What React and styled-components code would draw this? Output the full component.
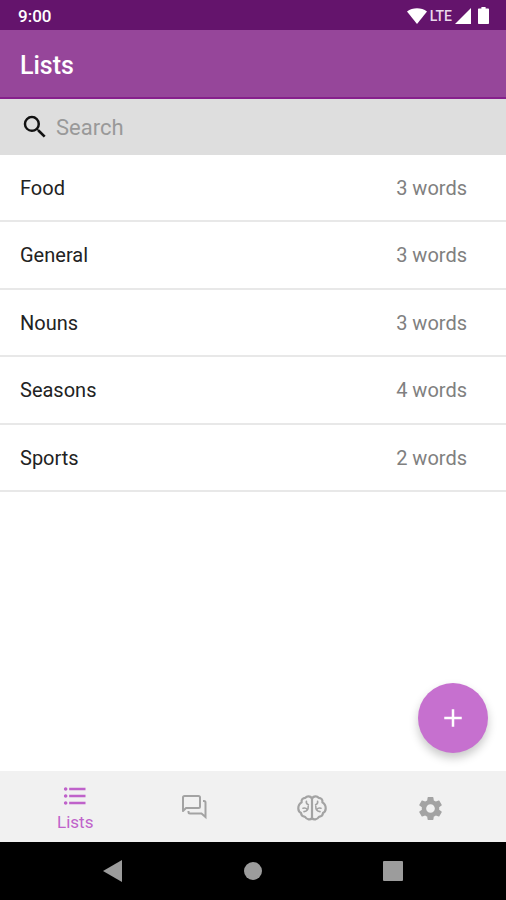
import { useState } from "react";
import styled, { createGlobalStyle } from "styled-components";
import {
  MdAdd,
  MdFormatListBulleted,
  MdSearch,
  MdSettings,
} from "react-icons/md";

const GlobalStyle = createGlobalStyle`
  * {
    box-sizing: border-box;
  }

  body {
    margin: 0;
    font-family: Roboto, "Liberation Sans", sans-serif;
    background-color: white;
  }
`;

const Container = styled.div`
  min-height: 100vh;
  display: flex;
  flex-direction: column;
`;

const StatusBar = styled.div`
  height: 30px;
  padding: 1px 17px 0 18px;
  display: flex;
  align-items: center;
  justify-content: space-between;
  color: white;
  background-color: #64146c;
`;

const Time = styled.span`
  font-size: 17px;
  font-weight: 500;
  line-height: 28px;
`;

const StatusIcons = styled.div`
  display: flex;
  align-items: center;
  gap: 3px;
`;

const Network = styled.span`
  font-size: 14px;
  font-weight: 500;
  line-height: 28px;
  color: #ead9ec;
`;

const Battery = styled.svg`
  margin-left: 4px;
`;

const Header = styled.header`
  height: 69px;
  padding: 4px 20px 0;
  display: flex;
  align-items: center;
  color: white;
  background-color: #96469a;
  border-bottom: 2px solid #86208c;
`;

const Title = styled.h1`
  margin: 0;
  font-size: 25px;
  font-weight: 500;
`;

const SearchBar = styled.label`
  height: 56px;
  padding: 0 20px;
  display: flex;
  align-items: center;
  gap: 6px;
  color: #111;
  background-color: #dedede;
`;

const SearchInput = styled.input`
  flex: 1;
  min-width: 0;
  padding: 0;
  border: none;
  outline: none;
  font-family: inherit;
  font-size: 22px;
  color: #222;
  background: transparent;

  &::placeholder {
    color: #999;
    opacity: 1;
  }
`;

const Main = styled.main`
  flex: 1;
  position: relative;
`;

const WordLists = styled.ul`
  margin: 0;
  padding: 0;
  list-style: none;
`;

const Row = styled.li`
  height: 67px;
  padding: 0 39px 0 20px;
  display: flex;
  align-items: center;
  justify-content: space-between;
  font-size: 20px;
  border-bottom: 2px solid #e8e8e8;

  &:nth-child(even) {
    height: 68px;
  }
`;

const Name = styled.span`
  color: #222;
`;

const Count = styled.span`
  color: #808080;
`;

const AddButton = styled.button`
  position: absolute;
  right: 18px;
  bottom: 18px;
  width: 70px;
  height: 70px;
  padding: 0;
  display: flex;
  align-items: center;
  justify-content: center;
  border: none;
  border-radius: 50%;
  color: white;
  background-color: #c670cf;
  box-shadow: 0 5px 10px rgba(0, 0, 0, 0.22);
`;

const TabBar = styled.nav`
  height: 71px;
  padding: 0 16px;
  display: flex;
  background-color: #f1f1f1;
`;

const Tab = styled.button`
  flex: 1;
  padding: 3px 0 0;
  display: flex;
  flex-direction: column;
  align-items: center;
  justify-content: center;
  border: none;
  font-family: inherit;
  font-size: 17px;
  line-height: 24px;
  color: ${(props) => (props.$active ? "#bf62ca" : "#a3a3a3")};
  background: transparent;
`;

const SystemBar = styled.div`
  height: 58px;
  padding: 0 43px;
  display: flex;
  background-color: black;
`;

const SystemButton = styled.button`
  flex: 1;
  padding: 0;
  display: flex;
  align-items: center;
  justify-content: center;
  border: none;
  color: #9c9c9c;
  background: transparent;
`;

const ChatIcon = () => (
  <svg width="26" height="26" viewBox="0 0 26 26" fill="none" stroke="currentColor" strokeWidth="2">
    <path d="M2 16V2.500C2 1.700 2.700 1 3.500 1h14c.8 0 1.500.7 1.500 1.500v9c0 .8-.7 1.500-1.500 1.500H5z" strokeLinejoin="round" />
    <path d="M22 6h1c.9 0 1.500.6 1.500 1.500V22L20.500 18.500H9c-.9 0-1.500-.6-1.500-1.500v-1" />
  </svg>
);

const BrainIcon = () => (
  <svg width="30" height="26" viewBox="0 0 30 26" fill="none" stroke="currentColor" strokeLinecap="round" strokeLinejoin="round">
    <g strokeWidth="2.2">
      <path d="M15 3.200C13.200 1 10 .8 8.400 2.800 5.600 2.800 4.200 5 4.600 7.400 2 9 1.200 11 1.300 13.600c.1 2.200 1.200 3.600 2.700 4.400.2 2.400 1.800 3.600 4 3.800 1.800 3 5.400 3.400 7 1.400" />
      <path d="M15 3.200C16.800 1 20 .8 21.600 2.800c2.800 0 4.200 2.200 3.800 4.600 2.600 1.600 3.400 3.600 3.300 6.200-.1 2.200-1.200 3.600-2.700 4.400-.2 2.400-1.800 3.600-4 3.800-1.800 3-5.400 3.400-7 1.400" />
      <path d="M15 3.200v20" />
    </g>
    <g strokeWidth="1.6">
      <path d="M9.400 6.200c-.4 1.800.4 3 2 3.600M6 13.200c1.800-.6 3.400 0 4.400 1.400M11.200 11.400c.2 3-1.200 4.800-4.200 5.200" />
      <path d="M20.600 6.200c.4 1.800-.4 3-2 3.600M24 13.200c-1.800-.6-3.400 0-4.400 1.400M18.800 11.400c-.2 3 1.200 4.800 4.200 5.200" />
    </g>
  </svg>
);

const lists = [
  { name: "Food", words: 3 },
  { name: "General", words: 3 },
  { name: "Nouns", words: 3 },
  { name: "Seasons", words: 4 },
  { name: "Sports", words: 2 },
];

const App = () => {
  const [search, setSearch] = useState("");
  const [tab, setTab] = useState("lists");

  const visible = lists.filter((list) =>
    list.name.toLowerCase().includes(search.toLowerCase())
  );

  return (
    <Container>
      <GlobalStyle />
      <StatusBar>
        <Time>9:00</Time>
        <StatusIcons>
          <svg width="20" height="16" viewBox="0 0 20 16" fill="currentColor">
            <path d="M0 3.4C5.6-.8 14.4-.8 20 3.4L10 16z" />
          </svg>
          <Network>LTE</Network>
          <svg width="16" height="16" viewBox="0 0 16 16" fill="currentColor">
            <path d="M16 0v16H0z" />
          </svg>
          <Battery width="11" height="17" viewBox="0 0 11 17" fill="currentColor">
            <path d="M3.4 0h4.2v1.6H10c.6 0 1 .4 1 1V16c0 .6-.4 1-1 1H1c-.6 0-1-.4-1-1V2.600c0-.6.4-1 1-1h2.400z" />
          </Battery>
        </StatusIcons>
      </StatusBar>
      <Header>
        <Title>Lists</Title>
      </Header>
      <SearchBar>
        <MdSearch size={30} />
        <SearchInput
          type="text"
          aria-label="Search"
          placeholder="Search"
          value={search}
          onChange={(e) => setSearch(e.target.value)}
        />
      </SearchBar>
      <Main>
        <WordLists>
          {visible.map((list) => (
            <Row key={list.name}>
              <Name>{list.name}</Name>
              <Count>{list.words} words</Count>
            </Row>
          ))}
        </WordLists>
        <AddButton aria-label="Add list">
          <MdAdd size={30} />
        </AddButton>
      </Main>
      <TabBar>
        <Tab $active={tab === "lists"} onClick={() => setTab("lists")}>
          <MdFormatListBulleted size={28} />
          Lists
        </Tab>
        <Tab $active={tab === "chat"} aria-label="Phrases" onClick={() => setTab("chat")}>
          <ChatIcon />
        </Tab>
        <Tab $active={tab === "train"} aria-label="Training" onClick={() => setTab("train")}>
          <BrainIcon />
        </Tab>
        <Tab $active={tab === "settings"} aria-label="Settings" onClick={() => setTab("settings")}>
          <MdSettings size={29} />
        </Tab>
      </TabBar>
      <SystemBar>
        <SystemButton aria-label="Back">
          <svg width="20" height="22" viewBox="0 0 20 22" fill="currentColor">
            <path d="M19 0v22L0 11z" />
          </svg>
        </SystemButton>
        <SystemButton aria-label="Home">
          <svg width="18" height="18" viewBox="0 0 18 18" fill="currentColor">
            <circle cx="9" cy="9" r="9" />
          </svg>
        </SystemButton>
        <SystemButton aria-label="Overview">
          <svg width="20" height="20" viewBox="0 0 20 20" fill="currentColor">
            <rect width="20" height="20" rx="1" />
          </svg>
        </SystemButton>
      </SystemBar>
    </Container>
  );
};

export default App;
